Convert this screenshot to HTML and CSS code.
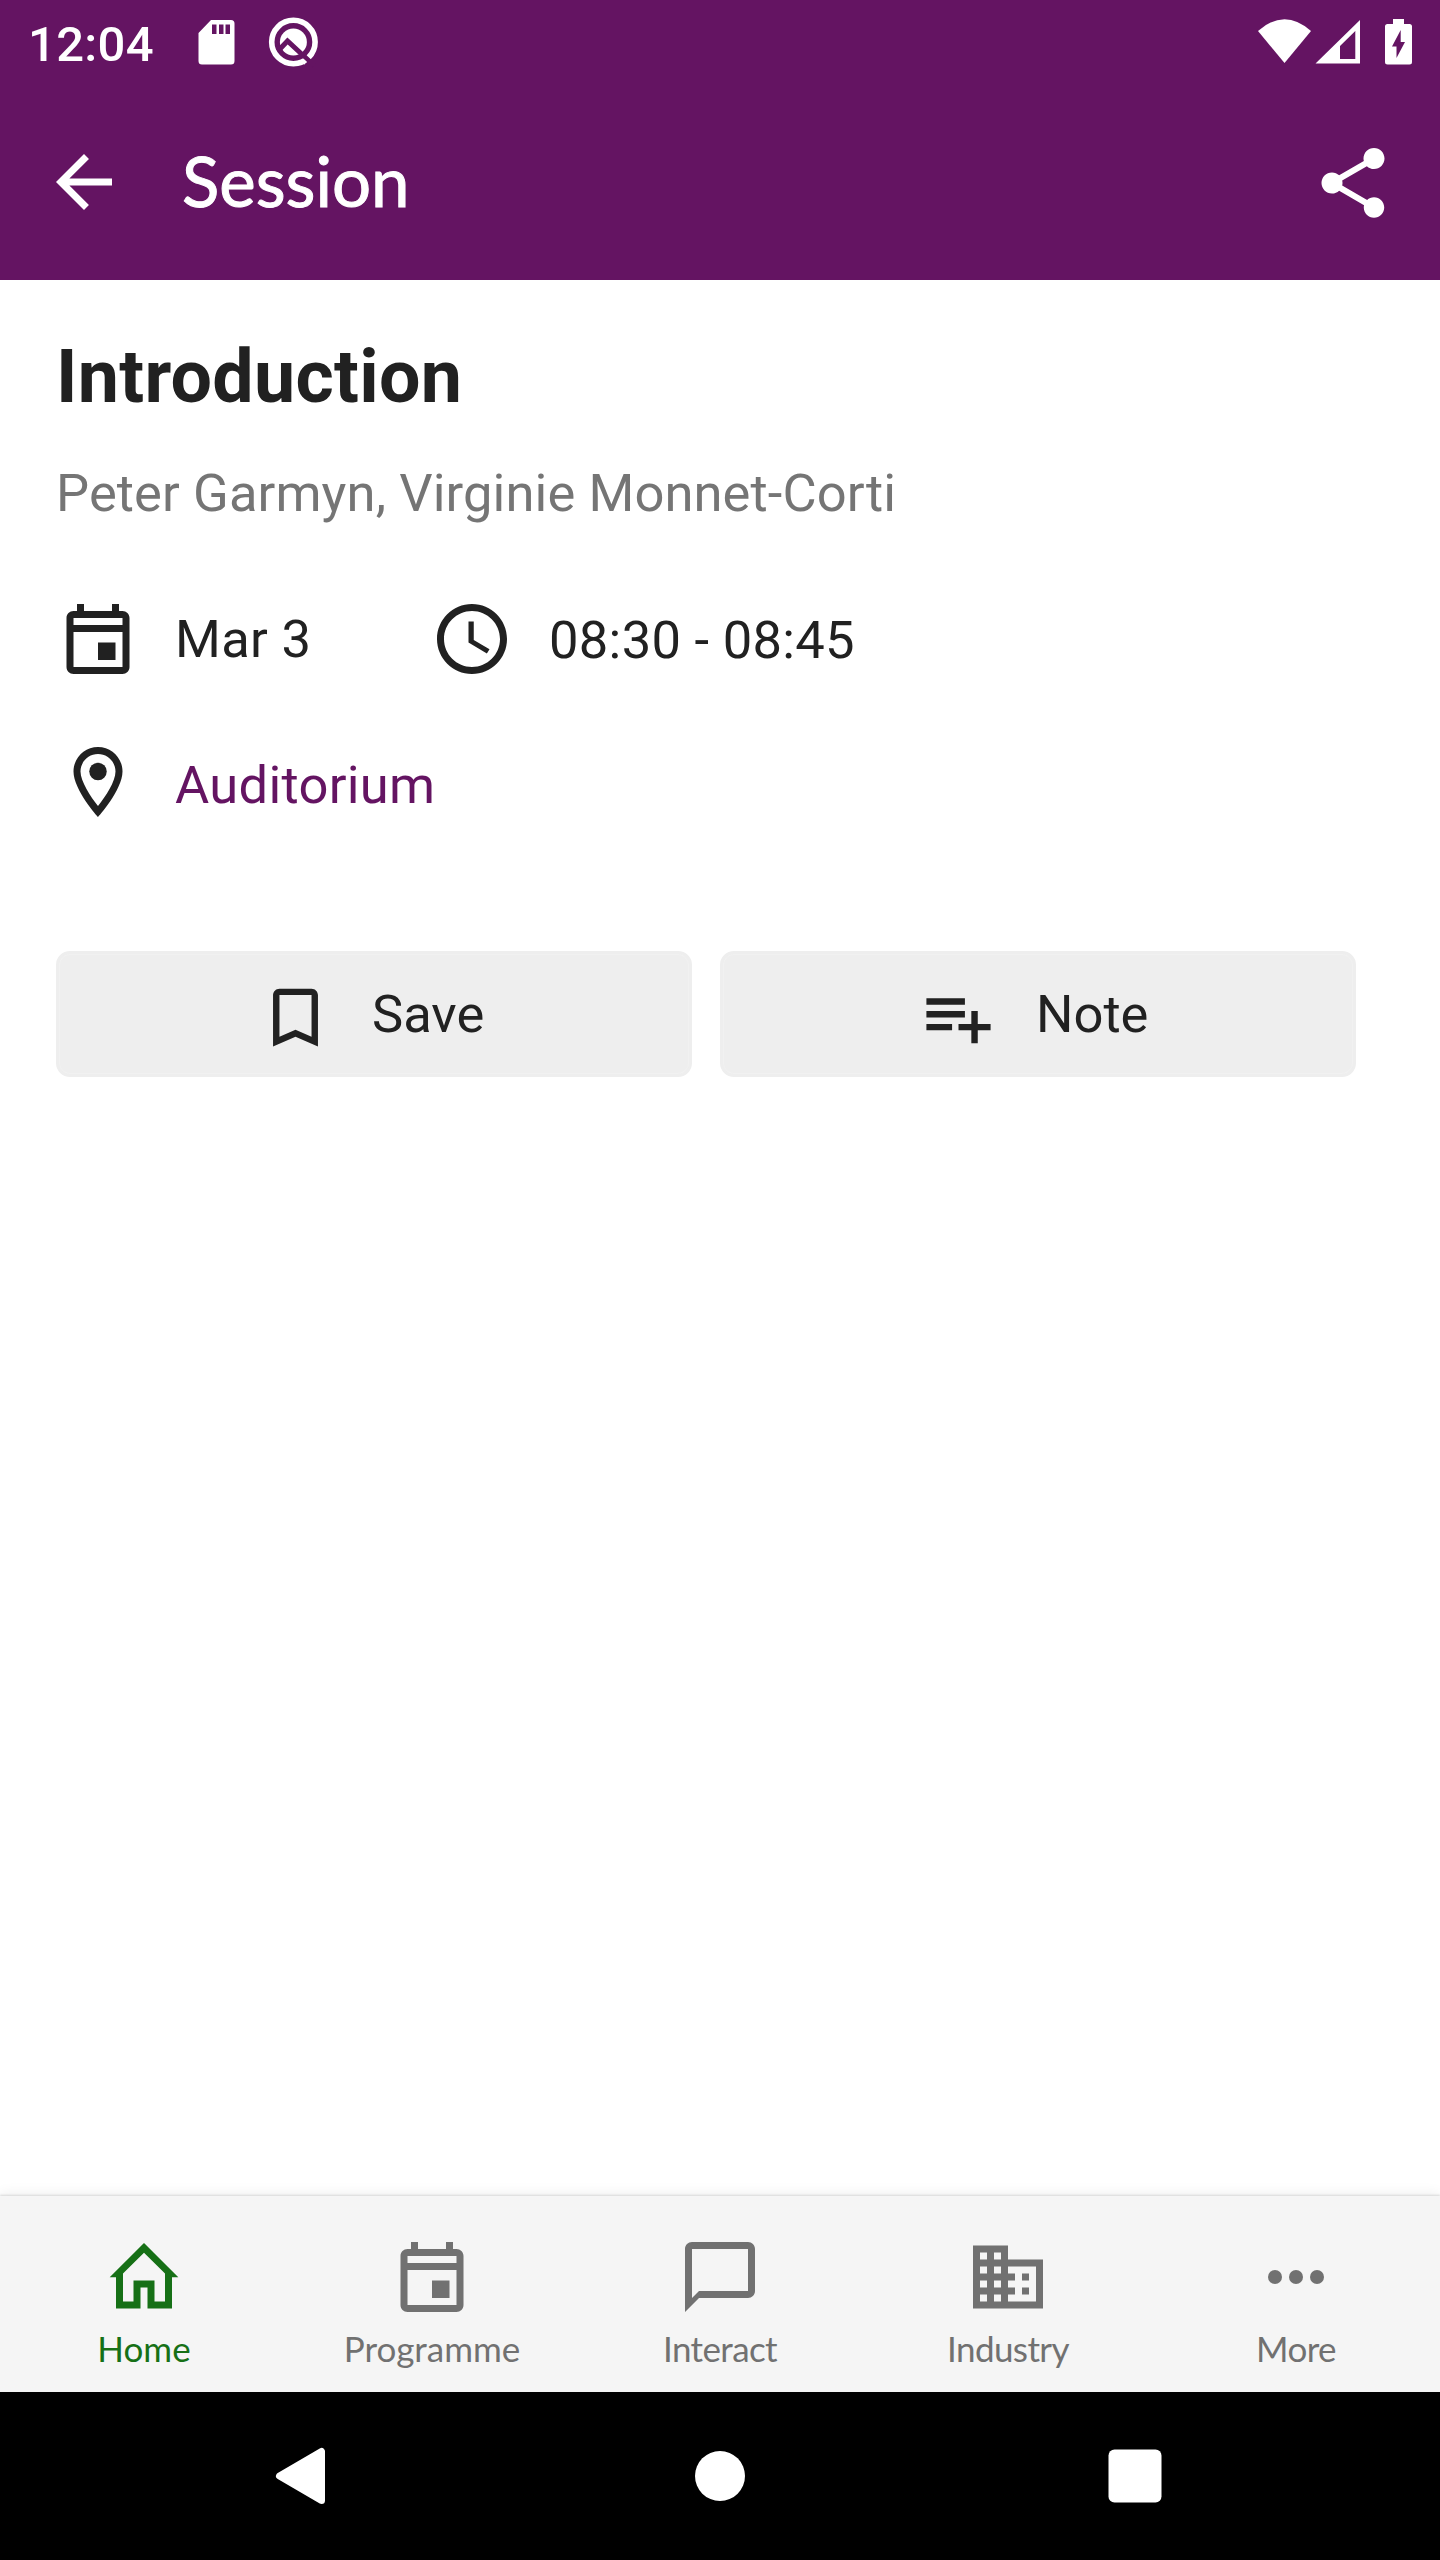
FILE: index.html
```html
<!DOCTYPE html>
<html lang="en">
<head>
<meta charset="utf-8">
<title>Session</title>
<link rel="stylesheet" href="styles.css">
</head>
<body>
<div class="screen">
  <div class="status-bar">
    <span class="clock">12:04</span>
    <svg class="status-left" viewBox="190 0 140 84">
      <path fill-rule="evenodd" d="M211 20H231Q234.500 20 234.500 23.500V61Q234.500 64.500 231 64.500H202Q198.500 64.500 198.500 61V33ZM212 24.500V34H216.500V24.500ZM219 24.500V34H223.500V24.500ZM225.500 24.500V34H230V24.500Z"/>
      <circle cx="293.400" cy="42" r="21.700" fill="none" stroke="#fff" stroke-width="5.600"/>
      <circle cx="293.400" cy="42" r="13.500"/>
      <path d="M278 51L287.500 41L314 65.500" fill="none" stroke="#641462" stroke-width="5"/>
      <path d="M302 60L305.500 63.200" stroke="#fff" stroke-width="4"/>
    </svg>
    <svg class="status-right" viewBox="1250 0 190 84">
      <path d="M1258 31Q1284.500 7.500 1311 31L1284.500 63Z"/>
      <path fill-rule="evenodd" d="M1360 20V63.500H1315.500ZM1355.300 31L1340 46V59H1355.300Z"/>
      <path fill-rule="evenodd" d="M1393 19H1404V24H1409.500Q1412 24 1412 26.500V62Q1412 64.500 1409.500 64.500H1387.500Q1385 64.500 1385 62V26.500Q1385 24 1387.500 24H1393ZM1400.700 30L1392 46.500H1396.500V58L1405 42H1400.700Z"/>
    </svg>
  </div>
  <header class="app-bar">
    <svg class="icon" viewBox="0 0 24 24"><path d="M20 11H7.830l5.590-5.590L12 4l-8 8 8 8 1.410-1.410L7.830 13H20v-2z"/></svg>
    <h1 class="app-title">Session</h1>
    <svg class="icon share" viewBox="0 0 24 24"><path d="M18 16.080c-.76 0-1.440.3-1.960.77L8.910 12.700c.05-.23.09-.46.09-.7s-.04-.47-.09-.7l7.050-4.110c.54.5 1.250.81 2.040.81 1.660 0 3-1.340 3-3s-1.340-3-3-3-3 1.340-3 3c0 .24.04.47.09.7L8.040 9.810C7.500 9.310 6.790 9 6 9c-1.660 0-3 1.340-3 3s1.340 3 3 3c.79 0 1.500-.31 2.040-.81l7.120 4.160c-.05.21-.08.43-.08.65 0 1.610 1.310 2.920 2.920 2.920s2.920-1.310 2.920-2.920-1.310-2.920-2.920-2.920z"/></svg>
  </header>
  <main class="content">
    <h2 class="title">Introduction</h2>
    <p class="people">Peter Garmyn, Virginie Monnet-Corti</p>
    <div class="row">
      <svg class="icon" viewBox="0 0 24 24"><path d="M19 4h-1V2h-2v2H8V2H6v2H5c-1.110 0-2 .9-2 2v14c0 1.100.89 2 2 2h14c1.100 0 2-.9 2-2V6c0-1.100-.9-2-2-2zm0 16H5V10h14v10zm0-12H5V6h14v2zm-7 5h5v5h-5v-5z"/></svg>
      <span class="date">Mar 3</span>
      <svg class="icon" viewBox="0 0 24 24"><path d="M11.990 2C6.470 2 2 6.480 2 12s4.470 10 9.990 10C17.520 22 22 17.520 22 12S17.520 2 11.990 2zM12 20c-4.420 0-8-3.580-8-8s3.580-8 8-8 8 3.580 8 8-3.580 8-8 8zm.5-13H11v6l5.250 3.150.75-1.230-4.500-2.670z"/></svg>
      <span class="time">08:30 - 08:45</span>
    </div>
    <div class="row place">
      <svg class="icon" viewBox="0 0 24 24"><path d="M12 2C8.130 2 5 5.130 5 9c0 5.250 7 13 7 13s7-7.750 7-13c0-3.870-3.130-7-7-7zM7 9c0-2.760 2.240-5 5-5s5 2.240 5 5c0 2.880-2.880 7.190-5 9.880C9.920 16.210 7 11.850 7 9z"/><circle cx="12" cy="9" r="2.500"/></svg>
      <a class="link">Auditorium</a>
    </div>
    <div class="actions">
      <div class="button save">
        <svg viewBox="0 0 24 24"><path d="M17 3H7c-1.100 0-2 .9-2 2v16l7-3 7 3V5c0-1.100-.9-2-2-2zm0 15l-5-2.180L7 18V5h10v13z"/></svg>
        <span>Save</span>
      </div>
      <div class="button note">
        <svg viewBox="0 0 24 24"><path d="M14 10H2v2h12v-2zm0-4H2v2h12V6zm4 8v-4h-2v4h-4v2h4v4h2v-4h4v-2h-4zM2 16h8v-2H2v2z"/></svg>
        <span>Note</span>
      </div>
    </div>
  </main>
  <nav class="tabs">
    <div class="tab active">
      <svg class="icon" viewBox="0 0 24 24"><path fill-rule="evenodd" d="M12 2.300L21.800 12.100H20V21H13V15H11V21H4V12.100H2.200ZM12 5.100L6 11V19H9V13H15V19H18V11Z"/></svg>
      <span class="home">Home</span>
    </div>
    <div class="tab">
      <svg class="icon" viewBox="0 0 24 24"><path d="M19 4h-1V2h-2v2H8V2H6v2H5c-1.110 0-2 .9-2 2v14c0 1.100.89 2 2 2h14c1.100 0 2-.9 2-2V6c0-1.100-.9-2-2-2zm0 16H5V10h14v10zm0-12H5V6h14v2zm-7 5h5v5h-5v-5z"/></svg>
      <span class="programme">Programme</span>
    </div>
    <div class="tab">
      <svg class="icon" viewBox="0 0 24 24"><path d="M20 2H4c-1.100 0-2 .9-2 2v18l4-4h14c1.100 0 2-.9 2-2V4c0-1.100-.9-2-2-2zm0 14H6l-2 2V4h16v12z"/></svg>
      <span class="interact">Interact</span>
    </div>
    <div class="tab">
      <svg class="icon" viewBox="0 0 24 24"><path d="M12 7V3H2v18h20V7H12zM6 19H4v-2h2v2zm0-4H4v-2h2v2zm0-4H4V9h2v2zm0-4H4V5h2v2zm4 12H8v-2h2v2zm0-4H8v-2h2v2zm0-4H8V9h2v2zm0-4H8V5h2v2zm10 12h-8v-2h2v-2h-2v-2h2v-2h-2V9h8v10zm-2-8h-2v2h2v-2zm0 4h-2v2h2v-2z"/></svg>
      <span class="industry">Industry</span>
    </div>
    <div class="tab">
      <svg class="icon" viewBox="0 0 24 24"><circle cx="6" cy="12" r="2"/><circle cx="12" cy="12" r="2"/><circle cx="18" cy="12" r="2"/></svg>
      <span class="more">More</span>
    </div>
  </nav>
  <div class="system-nav">
    <svg viewBox="0 0 1440 168">
      <path d="M279.500 84L321.500 59.500V108.500Z" stroke="#fff" stroke-width="7" stroke-linejoin="round"/>
      <circle cx="720" cy="84" r="25"/>
      <rect x="1108.500" y="57.500" width="53" height="53" rx="6"/>
    </svg>
  </div>
</div>
</body>
</html>
```
FILE: styles.css
```css
* { box-sizing: border-box; }

body {
  margin: 0;
  background: #fff;
  font-family: Roboto, sans-serif;
  color: #212121;
}

svg { display: block; fill: currentColor; flex: none; }
h1, h2, p { margin: 0; white-space: nowrap; }

.screen {
  width: 1440px;
  height: 2560px;
  display: flex;
  flex-direction: column;
  overflow: hidden;
}

.icon { width: 84px; height: 84px; }

.status-bar {
  height: 84px;
  display: flex;
  background: #641462;
  color: #fff;
}
.clock {
  width: 190px;
  padding: 15px 0 0 28px;
  font-size: 49px;
  font-weight: 500;
  line-height: 60px;
  letter-spacing: 0.3px;
}
.status-left { width: 140px; height: 84px; }
.status-right { width: 190px; height: 84px; margin-left: auto; }

.app-bar {
  height: 196px;
  display: flex;
  align-items: center;
  padding: 0 45px 0 42px;
  background: #641462;
  color: #fff;
}
.app-title {
  margin: -3px 0 0 56px;
  font: 400 69px/84px Lato, sans-serif;
  -webkit-text-stroke: 1px currentColor;
}
.share { margin: 2px 0 0 auto; }

.content {
  flex: 1;
  padding: 54px 56px 0;
  font-size: 52.5px;
}
.title { font-size: 73.5px; line-height: 86px; letter-spacing: 0.3px; }
.people { margin-top: 42px; line-height: 62px; letter-spacing: 0.1px; color: #757575; }
.row { display: flex; margin-top: 73px; height: 84px; line-height: 84px; letter-spacing: 0.3px; }
.date { width: 290px; padding-left: 35px; }
.time { padding-left: 35px; padding-top: 1px; }
.place { margin-top: 59px; }
.link { padding: 3px 0 0 35px; color: #641462; }

.actions { display: flex; gap: 28px; margin-top: 127px; }
.button {
  width: 636px;
  height: 126px;
  display: flex;
  align-items: center;
  gap: 38px;
  padding-left: 198px;
  border: 3px solid #eee;
  border-radius: 14px;
  background: #eee;
  box-shadow: inset 0 0 0 1px #f1f1f1;
}
.note { padding-left: 197px; gap: 39px; }
.button svg { width: 77px; height: 77px; margin-top: 6px; }

.tabs {
  height: 196px;
  display: flex;
  background: #f5f5f5;
  color: #717171;
  box-shadow: 0 -1px 2px #d8d8d8, 0 -3px 12px #f0f0f0;
}
.tab {
  flex: 1;
  display: flex;
  flex-direction: column;
  align-items: center;
  padding-top: 39px;
  font: 400 35px/42px Lato, sans-serif;
}
.tab span { margin-top: 8px; }
.interact, .industry, .more { letter-spacing: -0.6px; }
.active { color: #167016; }

.system-nav { height: 168px; background: #000; color: #fff; }
.system-nav svg { width: 1440px; height: 168px; }
```
